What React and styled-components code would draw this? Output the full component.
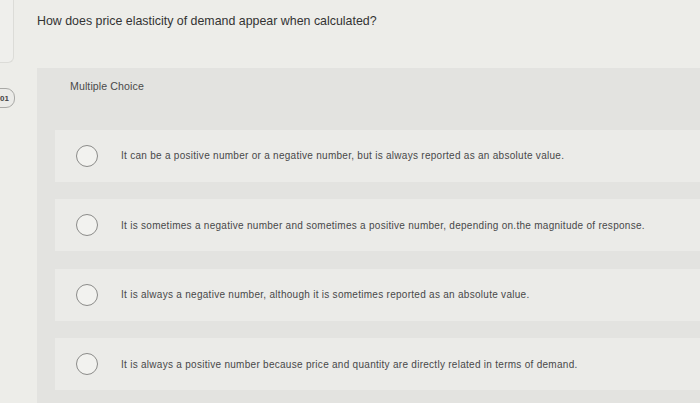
import React from "react";
import styled, { createGlobalStyle } from "styled-components";

const GlobalStyle = createGlobalStyle`
  html, body {
    margin: 0;
    padding: 0;
    background: #ecece9;
  }
  * {
    box-sizing: border-box;
  }
`;

const Page = styled.div`
  display: flex;
  width: 700px;
  height: 403px;
  overflow: hidden;
  background: #edede9;
  font-family: "Liberation Sans", Arial, sans-serif;
  color: #3c3c3c;
`;

const Gutter = styled.div`
  display: flex;
  flex-direction: column;
  width: 37px;
  flex-shrink: 0;
`;

const SideCard = styled.div`
  width: 14px;
  height: 63px;
  border: 1px solid #dcdcd8;
  border-left: none;
  border-top: none;
  border-bottom-right-radius: 6px;
  background: #efefec;
`;

const Badge = styled.div`
  display: flex;
  align-items: center;
  justify-content: flex-end;
  margin: 25px 0 0 -12px;
  width: 27px;
  height: 20px;
  padding-right: 5px;
  border: 1px solid #a9a9a6;
  border-radius: 9px;
  background: #ebebe8;
  font-size: 8px;
  font-weight: bold;
  color: #444;
`;

const Main = styled.div`
  display: flex;
  flex-direction: column;
  flex: 1;
`;

const Question = styled.div`
  height: 68px;
  padding-top: 14px;
  font-size: 12.4px;
  color: #333;
`;

const Panel = styled.div`
  flex: 1;
  display: flex;
  flex-direction: column;
  gap: 17.5px;
  padding: 12px 0 0 18px;
  background: #e3e3e0;
`;

const Label = styled.div`
  margin: 0 0 20px 15px;
  font-size: 10.6px;
  letter-spacing: 0.1px;
  color: #4a4a4a;
`;

const Row = styled.div`
  display: flex;
  align-items: center;
  height: 52px;
  flex-shrink: 0;
  padding-left: 21px;
  background: #ebebe8;
`;

const Radio = styled.span`
  width: 22px;
  height: 22px;
  flex-shrink: 0;
  border: 1.5px solid #8b8b89;
  border-radius: 50%;
  background: #f2f2ef;
`;

const OptionText = styled.span`
  margin-left: 23px;
  font-size: 10px;
  letter-spacing: 0.28px;
  color: #484848;
`;

const options = [
  "It can be a positive number or a negative number, but is always reported as an absolute value.",
  "It is sometimes a negative number and sometimes a positive number, depending on.the magnitude of response.",
  "It is always a negative number, although it is sometimes reported as an absolute value.",
  "It is always a positive number because price and quantity are directly related in terms of demand.",
];

export default function App() {
  return (
    <>
      <GlobalStyle />
      <Page>
        <Gutter>
          <SideCard />
          <Badge>01</Badge>
        </Gutter>
        <Main>
          <Question>How does price elasticity of demand appear when calculated?</Question>
          <Panel>
            <Label>Multiple Choice</Label>
            {options.map((text) => (
              <Row key={text}>
                <Radio />
                <OptionText>{text}</OptionText>
              </Row>
            ))}
          </Panel>
        </Main>
      </Page>
    </>
  );
}
